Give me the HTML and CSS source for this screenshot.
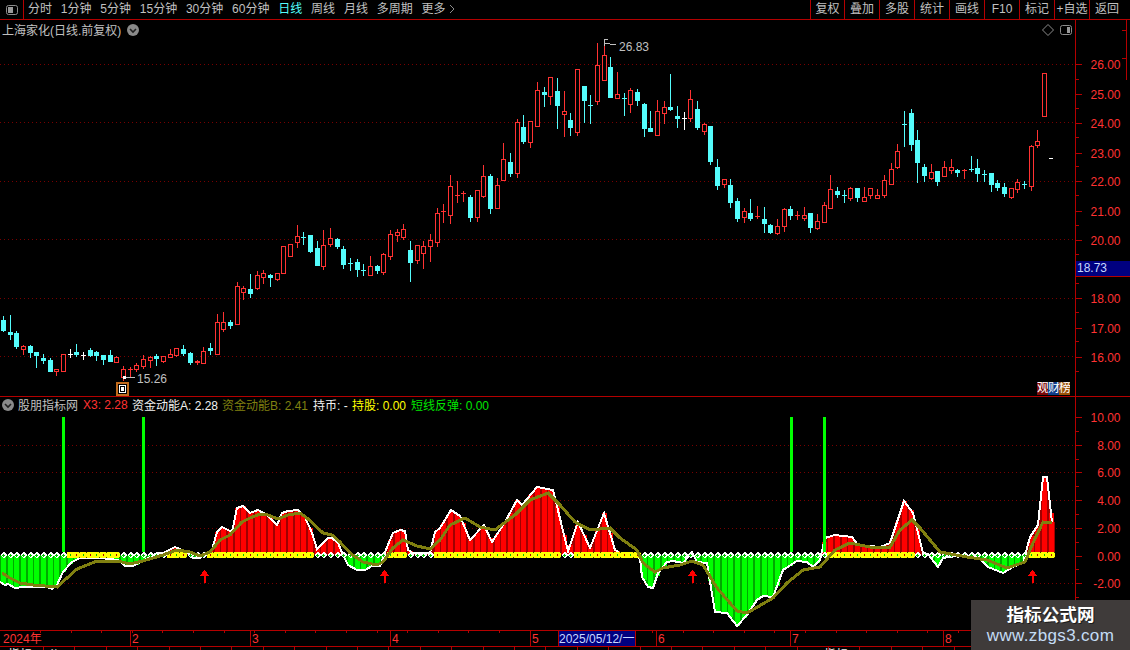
FILE: index.html
```html
<!DOCTYPE html>
<html lang="zh-CN">
<head>
<meta charset="utf-8">
<title>上海家化 日线</title>
<link rel="stylesheet" href="styles.css">
</head>
<body>
<div class="app">
  <header class="toolbar">
    <div class="toggle-cell">
      <svg class="panel-icon" viewBox="0 0 12 10"><rect x="0.5" y="0.5" width="11" height="9" rx="2" class="ico-frame"/><rect x="2" y="2" width="5" height="6" class="ico-fill"/></svg>
    </div>
    <nav class="periods">
      <span>分时</span><span>1分钟</span><span>5分钟</span><span>15分钟</span><span>30分钟</span><span>60分钟</span><span class="active">日线</span><span>周线</span><span>月线</span><span>多周期</span><span>更多 <svg class="more-arrow" viewBox="0 0 6 10"><path d="M1 1 L5 5 L1 9" class="ico-line"/></svg></span>
    </nav>
    <nav class="actions">
      <span>复权</span><span>叠加</span><span>多股</span><span>统计</span><span>画线</span><span>F10</span><span>标记</span><span>+自选</span><span>返回</span>
    </nav>
  </header>

  <section class="pane pane-price">
    <div class="pane-title">
      <span>上海家化(日线.前复权)</span>
      <svg class="round-icon" viewBox="0 0 12 12"><circle cx="6" cy="6" r="6" class="ico-round"/><path d="M3 5 L6 8 L9 5" class="ico-chev"/></svg>
    </div>
    <div class="pane-tools">
      <svg class="diamond-icon" viewBox="0 0 12 12"><path d="M6 0.5 L11.5 6 L6 11.5 L0.5 6 Z" class="ico-line"/></svg>
      <svg class="panel-icon" viewBox="0 0 12 10"><rect x="0.5" y="0.5" width="11" height="9" rx="2" class="ico-frame"/><rect x="7" y="2" width="3" height="6" class="ico-fill"/></svg>
    </div>
    <div class="badge"><span class="b1">观</span><span class="b2">财</span><span class="b3">榜</span></div>
    <svg id="price" class="chart" viewBox="0 20 1130 376" width="1130" height="376"></svg>
  </section>

  <section class="pane pane-ind">
    <div class="ind-legend">
      <svg class="round-icon" viewBox="0 0 12 12"><circle cx="6" cy="6" r="6" class="ico-round"/><path d="M3 5 L6 8 L9 5" class="ico-chev"/></svg>
      <span class="leg w-name">股朋指标网</span>
      <span class="leg w-x3 red">X3: 2.28</span>
      <span class="leg w-a white">资金动能A: 2.28</span>
      <span class="leg w-b olive">资金动能B: 2.41</span>
      <span class="leg w-bi white">持币: -</span>
      <span class="leg w-gu yellow">持股: 0.00</span>
      <span class="leg green">短线反弹: 0.00</span>
    </div>
    <svg id="ind" class="chart" viewBox="0 397 1130 233" width="1130" height="233"></svg>
  </section>

  <svg id="time" class="chart timeline" viewBox="0 630 1130 20" width="1130" height="20"></svg>

  <aside class="watermark">
    <div class="wm-title">指标公式网</div>
    <div class="wm-url">www.zbgs3.com</div>
  </aside>
</div>
<script src="app.js"></script>
</body>
</html>
```

FILE: styles.css
```css
* { box-sizing: border-box; }
html, body { margin: 0; padding: 0; background: #000; }
body {
  width: 1130px;
  height: 650px;
  overflow: hidden;
  font-family: "Liberation Sans", "Noto Sans CJK SC", sans-serif;
  font-size: 12px;
  color: #c0c0c0;
}
.app { position: relative; width: 1130px; height: 650px; overflow: hidden; display: flex; flex-direction: column; }

.toolbar {
  flex: none;
  height: 20px;
  display: flex;
  align-items: stretch;
  border-bottom: 1px solid #b40000;
  line-height: 19px;
  white-space: pre;
}
.toggle-cell { width: 24px; border-right: 1px solid #b40000; display: flex; align-items: center; justify-content: center; }
.panel-icon { width: 12px; height: 10px; display: block; }
.periods { display: flex; gap: 8.8px; padding-left: 4px; align-items: stretch; }
.periods .active { color: #54fcfc; }
.more-arrow { width: 6px; height: 10px; display: inline-block; vertical-align: -1px; }
.actions { margin-left: auto; display: flex; }
.actions span { width: 35px; text-align: center; border-left: 1px solid #b40000; }
.actions span:first-child { width: 34px; }
.actions span:last-child { width: 41px; padding-right: 6px; }

.ico-frame { fill: #000; stroke: #8c8c8c; stroke-width: 1; }
.ico-fill { fill: #9a9a9a; }
.ico-line { fill: none; stroke: #8c8c8c; stroke-width: 1; }
.ico-round { fill: #8a8a8a; }
.ico-chev { fill: none; stroke: #202020; stroke-width: 1.6; }

.pane { position: relative; flex: none; }
.pane-price { height: 377px; border-bottom: 1px solid #b40000; }
.pane-ind { height: 233px; }
.chart { display: block; shape-rendering: crispEdges; }
.timeline { flex: none; }

.pane-title {
  position: absolute;
  left: 2px;
  top: 0;
  height: 19px;
  display: flex;
  align-items: center;
  gap: 6px;
  white-space: pre;
}
.round-icon { width: 12px; height: 12px; display: block; flex: none; }
.pane-tools { position: absolute; left: 1042px; top: 4px; display: flex; align-items: center; gap: 6px; }
.diamond-icon { width: 12px; height: 12px; display: block; }
.badge { position: absolute; left: 1037px; top: 362px; display: flex; height: 13px; color: #fff; line-height: 13px; overflow: hidden; }
.badge span { width: 11px; display: block; overflow: hidden; text-align: center; font-size: 12px; }
.b1 { background: #7a0a0a; }
.b2 { background: #0f3c88; }
.b3 { background: #9a5208; }

.ind-legend {
  position: absolute;
  left: 2px;
  top: -1px;
  height: 17px;
  display: flex;
  align-items: center;
  white-space: pre;
}
.ind-legend .round-icon { margin-right: 4px; }
.w-name { width: 65px; }
.w-x3 { width: 49px; }
.w-a { width: 90px; }
.w-b { width: 91px; }
.w-bi { width: 39px; }
.w-gu { width: 59px; }
.red { color: #ff3232; }
.white { color: #f0f0f0; }
.olive { color: #808010; }
.yellow { color: #ffff00; }
.green { color: #00e600; }

.watermark {
  position: absolute;
  left: 971px;
  top: 600px;
  width: 159px;
  height: 50px;
  background: #3f3b3a;
  text-align: center;
  color: #fff;
}
.wm-title { font-size: 17.6px; font-weight: bold; line-height: 20px; margin-top: 5px; text-shadow: 1px 1px 0 #1c1c1c; }
.wm-url { font-size: 17px; line-height: 20px; margin-top: 1px; color: #c4dcf4; letter-spacing: .35px; }

/* chart drawing */
.line-red { stroke: #b40000; stroke-width: 1; fill: none; }
.grid { stroke: #780000; stroke-width: 1; stroke-dasharray: 1 3; fill: none; }
.wick-r { stroke: #ff3232; stroke-width: 1; }
.wick-c { stroke: #54fcfc; stroke-width: 1; }
.wick-w { stroke: #ffffff; stroke-width: 1; }
.body-r { fill: #000; stroke: #ff3232; stroke-width: 1; }
.body-c { fill: #54fcfc; }
.tick { stroke: #b40000; stroke-width: 1; }
.ax { fill: #ff3232; font-family: "Liberation Sans", "Noto Sans CJK SC", sans-serif; font-size: 12px; }
.ax-end { text-anchor: end; }
.cursor-box { fill: #000080; }
.cursor-text { fill: #c8d8ff; font-family: "Liberation Sans", "Noto Sans CJK SC", sans-serif; font-size: 12px; }
.note { fill: #c0c0c0; font-family: "Liberation Sans", sans-serif; font-size: 12px; }
.note-line { stroke: #c0c0c0; stroke-width: 1; fill: none; }
.mk-outer { fill: #c06a1c; }
.mk-black { fill: #000; }
.mk-white { fill: #fff; }
.dash { fill: #fff; }
.bar-r { fill: #ff0000; }
.bar-g { fill: #00ff00; }
.under-r { fill: #a00000; }
.under-g { fill: #00a800; }
.curve-w { fill: none; stroke: #fff; stroke-width: 2; }
.curve-o { fill: none; stroke: #808010; stroke-width: 3; }
.spike { fill: #00ff00; }
.band { fill: #ffff00; }
.band-dot-r { fill: #b00000; }
.band-dot-g { fill: #00c000; }
.band-notch { fill: #404000; }
.dia { fill: #fff; }
.dia-core { fill: #00c000; }
.arrow { fill: #ff0000; }
.tail { fill: #f0f0f0; font-family: "Noto Sans CJK SC", sans-serif; font-size: 12px; }
```

FILE: app.js
```js
var X = function (i) { return Math.floor(3.5 + 6.673 * i); };

/* type, body top, body bottom, wick top, wick bottom */
var C = [
['c',320,330,316,331],['c',332,334,315,339],['c',333,346,331,348],['r',346,349,345,354],['c',346,352,345,357],
['c',352,355,352,367],['c',358,360,354,363],['c',360,371,358,371],['r',369,371,369,375],['r',354,371,354,371],
['w',354,354,349,357],['c',352,354,344,356],['w',355,355,352,359],['c',350,355,348,356],['c',352,355,351,360],
['c',355,359,355,364],['c',355,361,350,361],['r',357,362,356,362],['r',369,377,366,380],['r',369,369,367,376],
['r',365,369,363,371],['r',359,366,355,368],['r',357,360,356,367],['c',356,358,354,365],['r',356,361,356,362],
['r',354,357,349,357],['r',348,355,348,356],['c',349,353,345,355],['c',353,362,352,364],['r',361,362,360,364],
['r',351,363,347,363],['c',348,350,343,354],['r',322,354,314,354],['r',322,329,312,331],['c',322,325,320,328],
['r',286,324,282,324],['r',288,292,286,299],['c',289,293,274,297],['r',275,288,271,289],['r',273,277,270,283],
['c',275,277,274,286],['r',273,279,273,280],['r',246,273,246,273],['r',244,256,244,256],['r',236,242,225,247],
['c',237,237,232,244],['c',235,251,235,252],['c',248,265,241,265],['r',245,266,230,269],['r',238,244,228,246],
['c',239,246,238,248],['c',249,264,246,268],['c',263,263,258,270],['c',262,269,259,276],['c',270,270,264,275],
['r',266,275,256,275],['c',266,270,265,273],['r',254,272,253,274],['r',234,256,230,259],['r',232,235,229,241],
['r',229,237,224,239],['c',250,262,241,281],['r',245,260,245,263],['r',246,253,241,268],['r',240,246,234,261],
['r',213,242,208,246],['r',211,211,204,222],['r',186,215,175,223],['r',195,195,181,202],['r',193,193,191,201],
['c',197,217,195,221],['r',190,217,190,221],['r',176,196,165,197],['c',176,208,174,213],['r',185,208,178,208],
['r',159,180,143,180],['c',162,173,153,176],['r',122,173,119,177],['c',127,141,115,143],['r',121,142,121,147],
['r',90,126,82,126],['c',92,94,87,106],['r',77,96,77,104],['c',91,105,78,128],['r',111,114,91,136],
['c',120,127,113,135],['r',69,132,69,135],['c',86,100,86,122],['c',105,105,95,123],['r',65,101,43,104],
['r',55,80,42,80],['c',67,97,57,97],['r',94,98,72,98],['c',98,98,93,115],['r',90,104,88,112],
['c',92,100,89,105],['c',104,128,103,136],['c',128,131,111,131],['r',111,135,100,135],['r',107,113,101,123],
['c',107,109,74,110],['c',116,118,106,127],['w',118,118,112,129],['r',99,118,90,121],['c',109,127,101,129],
['r',124,131,123,134],['c',126,161,126,164],['c',167,185,159,189],['r',179,184,179,187],['c',185,202,179,207],
['c',201,218,198,221],['r',211,217,208,222],['c',213,218,199,220],['r',216,216,206,218],['c',219,223,207,232],
['c',225,232,224,233],['r',226,233,219,234],['r',209,226,208,231],['c',209,215,206,219],['r',215,215,211,219],
['r',215,218,207,220],['c',213,227,213,232],['r',221,228,214,229],['r',205,222,202,222],['r',189,208,175,208],
['c',191,194,187,197],['c',195,195,190,202],['r',188,198,187,200],['c',188,197,188,201],['r',197,201,187,201],
['r',188,195,188,198],['r',195,198,189,198],['r',180,195,175,197],['r',169,184,163,184],['r',151,167,144,168],
['c',124,124,111,146],['c',113,144,109,150],['c',140,162,130,182],['c',167,175,164,181],['r',172,178,164,179],
['c',171,181,171,185],['r',167,176,161,176],['r',167,170,159,173],['c',170,172,169,176],['r',170,170,169,178],
['c',169,169,156,171],['c',168,173,159,181],['c',174,174,170,181],['c',173,184,173,191],['c',183,187,180,190],
['c',187,193,183,196],['r',188,197,188,198],['r',182,189,179,192],['c',184,184,181,188],['r',146,186,145,190],
['r',141,145,130,147],['r',73,116,73,116]
];

var W = [0,582,5,585,8,584,15,588,23,587,33,587,47,587,52,589,57,585,63,572,72,562,80,558,100,558,118,560,125,566,133,566,143,561,157,553,163,553,175,547,187,552,193,558,200,558,207,553,212,550,217,532,222,527,232,532,237,508,243,506,250,513,258,510,267,515,277,525,282,513,288,511,298,510,305,517,312,533,317,549,328,538,332,538,338,543,343,555,348,565,357,570,365,570,372,566,380,566,387,547,393,533,400,530,405,531,408,550,413,553,430,553,435,532,440,528,451,510,460,516,470,540,484,525,492,542,505,522,517,500,522,505,537,487,553,490,568,551,578,522,590,548,604,513,615,550,620,553,640,558,642,577,648,587,653,588,658,573,667,562,673,561,683,563,692,552,697,562,707,563,715,612,727,613,737,626,747,615,757,600,763,596,773,597,783,570,797,561,807,562,813,567,820,560,825,538,835,535,852,537,858,545,880,547,890,543,904,501,913,513,923,553,928,554,938,567,943,558,953,556,977,556,988,567,1003,573,1013,567,1023,563,1030,537,1038,525,1043,477,1047,477,1052,522];

var O = [2,573,10,578,20,583,33,585,57,587,67,578,77,569,97,561,118,561,130,564,143,561,163,555,177,550,190,552,200,556,210,552,220,540,230,535,242,522,250,518,260,514,268,515,278,519,288,515,300,513,307,518,323,533,332,535,340,542,350,553,363,562,377,565,383,562,393,548,403,540,417,546,430,549,440,540,450,525,465,518,480,527,495,530,515,515,530,500,548,493,560,505,575,522,590,530,610,528,620,538,637,550,643,563,655,572,663,568,680,565,692,561,703,565,717,588,737,611,747,613,773,598,787,583,803,570,820,567,835,550,850,543,870,547,890,547,900,530,912,520,920,528,940,552,967,557,987,560,1007,568,1025,562,1033,543,1043,522,1052,523];

var YELLOW = [[67,118],[167,186],[207,313],[387,406],[435,560],[574,640],[825,915],[1028,1056]];

function pts(a) { var s = []; for (var i = 0; i < a.length; i += 2) s.push(a[i] + ',' + a[i + 1]); return s.join(' '); }
function at(a, x) {
  for (var i = 0; i < a.length - 2; i += 2) {
    if (x <= a[i + 2]) return a[i + 1] + (a[i + 3] - a[i + 1]) * (x - a[i]) / (a[i + 2] - a[i]);
  }
  return a[a.length - 1];
}
function L(x1, y1, x2, y2, c) { return '<line x1="' + x1 + '" y1="' + y1 + '" x2="' + x2 + '" y2="' + y2 + '" class="' + c + '"/>'; }
function R(x, y, w, h, c) { return '<rect x="' + x + '" y="' + y + '" width="' + w + '" height="' + h + '" class="' + c + '"/>'; }
function T(x, y, t, c) { return '<text x="' + x + '" y="' + y + '" class="' + c + '">' + t + '</text>'; }

/* price pane */
var p = '';
[64, 122, 181, 239, 298, 356].forEach(function (y) { p += L(0, y + .5, 1075, y + .5, 'grid'); });
p += L(1075.5, 20, 1075.5, 396, 'line-red');
var labels = { 26: 64, 25: 94, 24: 123, 23: 153, 22: 181, 21: 211, 20: 240, 18: 298, 17: 328, 16: 357 };
for (var v in labels) {
  p += L(1076, labels[v] + .5, 1082, labels[v] + .5, 'tick');
  p += T(1120.5, labels[v] + 5, (+v).toFixed(2), 'ax ax-end');
}
[15.5, 16.5, 17.5, 18.5, 19.5, 20.5, 21.5, 22.5, 23.5, 24.5, 25.5].forEach(function (v) {
  var y = Math.round(64 + (26 - v) * 29.2) + .5;
  p += L(1076, y, 1079, y, 'tick');
});
p += L(1126.5, 20, 1126.5, 80, 'line-red') + L(1122, 30.5, 1127, 30.5, 'tick') + L(1122, 58.5, 1127, 58.5, 'tick');
p += R(1076, 261, 54, 15, 'cursor-box') + T(1077, 272, '18.73', 'cursor-text') + L(1076, 276.5, 1130, 276.5, 'tick');

C.forEach(function (c, i) {
  var x = X(i), k = c[0];
  var wick = 'wick-' + k;
  p += L(x + .5, c[3], x + .5, c[4] + 1, wick);
  if (c[1] === c[2]) {
    p += L(x - 2, c[1] + .5, x + 3, c[1] + .5, wick);
  } else if (k === 'r') {
    p += R(x - 1.5, c[1] + .5, 4, c[2] - c[1], 'body-r');
  } else {
    p += R(x - 2, c[1], 5, c[2] - c[1] + 1, 'body-c');
  }
});
p += R(1049, 158, 4, 1, 'dash');
/* highest / lowest price notes */
p += '<path d="M604.5 46 V39.5 H608 M604.5 43.5 H608 L612 44.5 H616" class="note-line"/>' + T(619, 51, '26.83', 'note');
p += L(124, 377.5, 135, 377.5, 'note-line') + R(123, 376, 3, 3, 'dash') + T(137, 383, '15.26', 'note');
p += R(116, 382, 13, 14, 'mk-outer') + R(118, 384, 9, 10, 'mk-black') + R(119, 385, 7, 8, 'mk-white') + R(120, 386, 5, 6, 'mk-black') + R(121, 387, 3, 4, 'mk-white');
document.getElementById('price').innerHTML = p;

/* indicator pane */
var yV = function (v) { return Math.round(555.5 - 13.85 * v); };
var g = '';
[8, 6, 4, 2, -2].forEach(function (v) { g += L(0, yV(v) + .5, 1075, yV(v) + .5, 'grid'); });
g += L(1075.5, 397, 1075.5, 630, 'line-red');
[10, 8, 6, 4, 2, 0, -2].forEach(function (v) {
  g += L(1076, yV(v) + .5, 1082, yV(v) + .5, 'tick');
  g += T(1120.5, yV(v) + 5, v.toFixed(2), 'ax ax-end');
});
[9, 7, 5, 3, 1, -1, -3].forEach(function (v) { g += L(1076, yV(v) + .5, 1079, yV(v) + .5, 'tick'); });

g += '<clipPath id="up"><rect x="0" y="397" width="1075" height="158"/></clipPath><clipPath id="down"><rect x="0" y="555" width="1075" height="75"/></clipPath>';
var poly = pts([0, 555].concat(W).concat([1055, 522, 1055, 555]));
g += '<polygon points="' + poly + '" clip-path="url(#up)" class="under-r"/>';
g += '<polygon points="' + poly + '" clip-path="url(#down)" class="under-g"/>';
for (var i = 0; i < 158; i++) {
  var x = X(i), y = Math.round(at(W, x));
  if (x >= 1042 && x <= 1048) y = 477;
  if (y < 555) g += R(x - 2, y, 5, 555 - y, 'bar-r');
  else if (y > 555) g += R(x - 2, 555, 5, y - 555, 'bar-g');
}
g += '<polyline points="' + pts(W) + '" class="curve-w"/>';
for (var j = 0; j < 158; j++) {
  var cx = X(j), yel = false;
  YELLOW.forEach(function (z) { if (cx >= z[0] && cx <= z[1]) yel = true; });
  if (yel) {
    g += R(cx - 3, 552, 7, 6, 'band');
    g += R(cx, 554, 1, 2, j % 2 ? 'band-dot-r' : 'band-dot-g');
    g += R(cx + 3, 552, 1, 1, 'band-notch') + R(cx + 3, 557, 1, 1, 'band-notch');
  } else {
    g += '<polygon points="' + pts([cx + .5, 551.5, cx + 4, 555, cx + .5, 558.5, cx - 3, 555]) + '" class="dia"/>';
    g += R(cx - 1, 554.5, 3, 1, 'dia-core') + R(cx, 553.5, 1, 3, 'dia-core');
  }
}
[62, 142, 790, 823].forEach(function (x) { g += R(x, 417, 3, 135, 'spike'); });
g += '<polyline points="' + pts(O) + '" class="curve-o"/>';
[204, 384, 692, 1032].forEach(function (x) {
  g += '<polygon points="' + pts([x + .5, 570, x + 5.5, 576, x + 1.5, 576, x + 1.5, 583, x - .5, 583, x - .5, 576, x - 4.5, 576]) + '" class="arrow"/>';
});
document.getElementById('ind').innerHTML = g;

/* time axis */
var t = '';
t += L(0, 630.5, 1130, 630.5, 'line-red') + L(0, 646.5, 1130, 646.5, 'line-red');
t += L(1075.5, 630, 1075.5, 646, 'line-red');
var months = [[130, '2'], [250, '3'], [390, '4'], [530, '5'], [656, '6'], [790, '7'], [943, '8']];
months.forEach(function (m) {
  t += L(m[0] + .5, 631, m[0] + .5, 646, 'tick') + T(m[0] + 2, 643, m[1], 'ax');
});
t += T(3, 643, '2024年', 'ax');
for (var k = 40; k < 1070; k += 30.6) {
  var tx = Math.round(k) + .5;
  t += L(tx, 631, tx, 633, 'tick');
}
for (var b = 43; b < 1130; b += 31.4) {
  var bx = Math.round(b) + .5;
  t += L(bx, 647, bx, 650, 'tick');
}
t += R(558, 631, 77, 15, 'cursor-box') + L(558.5, 631, 558.5, 646, 'tick') + L(635.5, 631, 635.5, 646, 'tick');
t += T(559, 643, '2025/05/12/一', 'cursor-text');
t += T(8, 659, '指标', 'tail') + T(48, 659, '公', 'tail') + T(824, 659, '指标', 'tail');
document.getElementById('time').innerHTML = t;
```
